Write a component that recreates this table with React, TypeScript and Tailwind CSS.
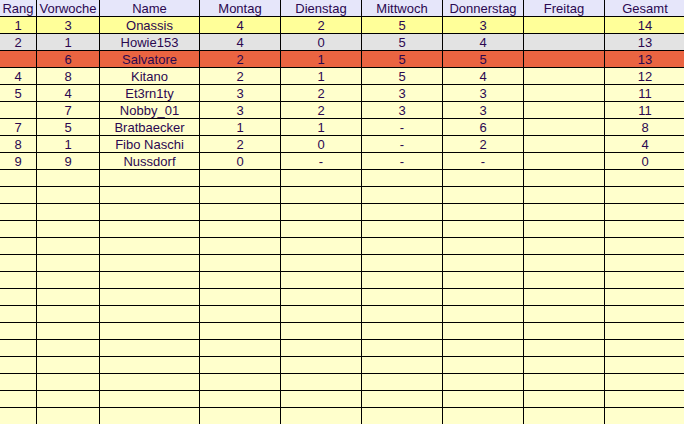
import React from "react";

const headers = ["Rang", "Vorwoche", "Name", "Montag", "Dienstag", "Mittwoch", "Donnerstag", "Freitag", "Gesamt"];

type Row = { cells: string[]; bg: string };

const data: Row[] = [
  { cells: ["1", "3", "Onassis", "4", "2", "5", "3", "", "14"], bg: "bg-[#ffff99]" },
  { cells: ["2", "1", "Howie153", "4", "0", "5", "4", "", "13"], bg: "bg-[#e3e3e3]" },
  { cells: ["", "6", "Salvatore", "2", "1", "5", "5", "", "13"], bg: "bg-[#ea6441]" },
  { cells: ["4", "8", "Kitano", "2", "1", "5", "4", "", "12"], bg: "bg-[#ffffcc]" },
  { cells: ["5", "4", "Et3rn1ty", "3", "2", "3", "3", "", "11"], bg: "bg-[#ffffcc]" },
  { cells: ["", "7", "Nobby_01", "3", "2", "3", "3", "", "11"], bg: "bg-[#ffffcc]" },
  { cells: ["7", "5", "Bratbaecker", "1", "1", "-", "6", "", "8"], bg: "bg-[#ffffcc]" },
  { cells: ["8", "1", "Fibo Naschi", "2", "0", "-", "2", "", "4"], bg: "bg-[#ffffcc]" },
  { cells: ["9", "9", "Nussdorf", "0", "-", "-", "-", "", "0"], bg: "bg-[#ffffcc]" },
];

for (let i = 0; i < 15; i++) {
  data.push({ cells: ["", "", "", "", "", "", "", "", ""], bg: "bg-[#ffffcc]" });
}

const widths = ["w-[37px]", "w-[63px]", "w-[100px]", "w-[81px]", "w-[81px]", "w-[81px]", "w-[81px]", "w-[81px]", "w-[80px]"];

function Cell({ text, idx, bg }: { text: string; idx: number; bg: string }) {
  const last = idx === 8;
  return (
    <div
      className={`${widths[idx]} ${bg} h-[17px] shrink-0 flex items-center justify-center border-b border-black ${
        last ? "" : "border-r"
      } text-[13px] leading-none text-[#2b0850] overflow-hidden whitespace-nowrap`}
    >
      {text}
    </div>
  );
}

export default function App() {
  return (
    <div
      className="w-[684px] h-[424px] overflow-hidden bg-[#ffffcc]"
      style={{ fontFamily: '"Liberation Sans", Arial, sans-serif' }}
    >
      <div className="flex">
        {headers.map((h, i) => (
          <Cell key={i} text={h} idx={i} bg="bg-[#e6e6fa]" />
        ))}
      </div>
      {data.map((r, ri) => (
        <div key={ri} className="flex">
          {r.cells.map((c, ci) => (
            <Cell key={ci} text={c} idx={ci} bg={r.bg} />
          ))}
        </div>
      ))}
    </div>
  );
}
